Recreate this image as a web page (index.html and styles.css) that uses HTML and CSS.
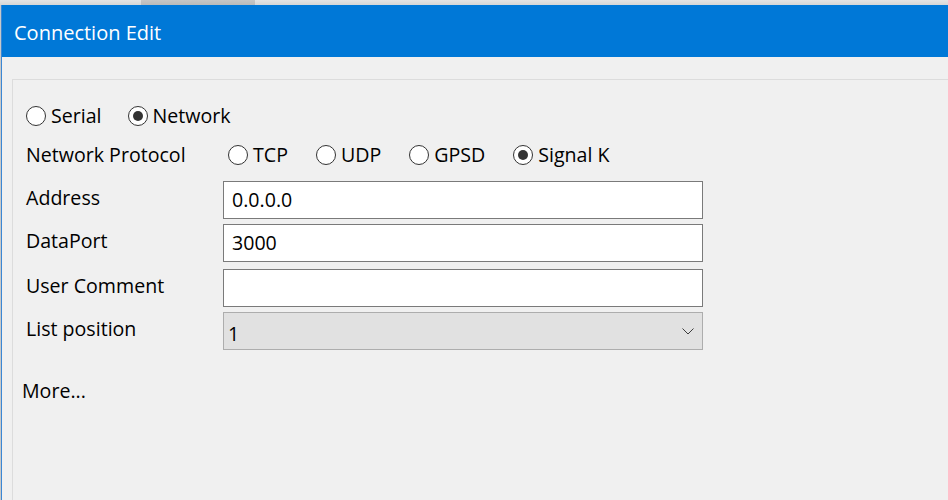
FILE: index.html
```html
<!DOCTYPE html>
<html lang="en">
<head>
<meta charset="utf-8">
<title>Connection Edit</title>
<link rel="stylesheet" href="styles.css">
</head>
<body>
<div class="desk">
  <div class="desk-gap"></div>
  <div class="desk-tab"></div>
</div>
<div class="frame">
  <div class="edge"></div>
  <div class="window">
    <div class="titlebar">Connection Edit</div>
    <div class="client">
      <div class="groupbox">
        <div class="radio-row type-row">
          <label class="radio"><span class="circle"></span>Serial</label>
          <label class="radio checked"><span class="circle"></span>Network</label>
        </div>
        <div class="form">
          <div class="row proto-row">
            <div class="label">Network Protocol</div>
            <div class="radio-row protocols">
              <label class="radio"><span class="circle"></span>TCP</label>
              <label class="radio"><span class="circle"></span>UDP</label>
              <label class="radio"><span class="circle"></span>GPSD</label>
              <label class="radio checked"><span class="circle"></span>Signal K</label>
            </div>
          </div>
          <div class="row">
            <div class="label field-label">Address</div>
            <div class="field">0.0.0.0</div>
          </div>
          <div class="row">
            <div class="label field-label">DataPort</div>
            <div class="field">3000</div>
          </div>
          <div class="row comment-row">
            <div class="label field-label">User Comment</div>
            <div class="field"></div>
          </div>
          <div class="row">
            <div class="label field-label">List position</div>
            <div class="combo">
              <span class="combo-value">1</span>
              <svg class="chevron" width="12" height="7" viewBox="0 0 12 7"><polyline points="0.5,0.5 6,6 11.5,0.5" fill="none" stroke="#3c3c3c" stroke-width="1"/></svg>
            </div>
          </div>
        </div>
        <div class="more">More...</div>
      </div>
    </div>
  </div>
</div>
</body>
</html>
```

FILE: styles.css
```css
html, body {
  margin: 0;
  height: 100%;
  overflow: hidden;
}

body {
  display: flex;
  flex-direction: column;
  background: #f0f0f0;
  font-family: "Open Sans", "Noto Sans", sans-serif;
  font-size: 19.6px;
  line-height: 26px;
  color: #000;
}

.desk {
  height: 5px;
  display: flex;
  background: linear-gradient(#e4e4e4, #d6d6d6);
  flex-shrink: 0;
}

.desk-gap {
  width: 141px;
}

.desk-tab {
  width: 114px;
  background: linear-gradient(#c6c6c6, #bababa);
}

.frame {
  flex: 1;
  display: flex;
  min-height: 0;
}

.edge {
  width: 1px;
  background: #c9c9c9;
}

.window {
  flex: 1;
  display: flex;
  flex-direction: column;
  border-left: 1px solid #3b87d4;
}

.titlebar {
  height: 52px;
  box-sizing: border-box;
  padding: 15px 0 0 12px;
  background: #0078d7;
  color: #fff;
  font-size: 20px;
  flex-shrink: 0;
}

.client {
  flex: 1;
  display: flex;
  padding: 22px 0 0 10px;
}

.groupbox {
  flex: 1;
  border-top: 1px solid #dcdcdc;
  border-left: 1px solid #dcdcdc;
  padding: 23px 0 0 9px;
}

.radio-row {
  display: flex;
  align-items: center;
  height: 26px;
}

.type-row {
  padding-left: 4px;
  gap: 26px;
}

.radio {
  display: flex;
  align-items: center;
  gap: 5px;
  white-space: nowrap;
}

.circle {
  width: 20px;
  height: 20px;
  box-sizing: border-box;
  border: 1px solid #333;
  border-radius: 50%;
  background: #fff;
  display: flex;
  align-items: center;
  justify-content: center;
  margin-top: -1px;
}

.checked .circle::after {
  content: "";
  width: 10px;
  height: 10px;
  border-radius: 50%;
  background: #333;
}

.form {
  display: flex;
  flex-direction: column;
  gap: 5px;
  padding-left: 4px;
  margin-top: 13px;
}

.row {
  display: flex;
}

.proto-row {
  margin-bottom: 8px;
}

.comment-row {
  margin-top: 2px;
}

.label {
  width: 197px;
  flex-shrink: 0;
}

.field-label {
  padding-top: 4px;
}

.protocols {
  padding-left: 5px;
  gap: 28px;
}

.field {
  width: 480px;
  height: 38px;
  box-sizing: border-box;
  border: 1px solid #7a7a7a;
  background: #fff;
  padding: 5px 8px 0;
}

.combo {
  width: 480px;
  height: 38px;
  box-sizing: border-box;
  border: 1px solid #adadad;
  background: #e1e1e1;
  padding: 0 8px 0 4px;
  display: flex;
  align-items: center;
  justify-content: space-between;
}

.combo-value {
  padding-top: 5px;
}

.chevron {
  display: block;
  margin-top: 1px;
}

.more {
  margin-top: 28px;
}
```
